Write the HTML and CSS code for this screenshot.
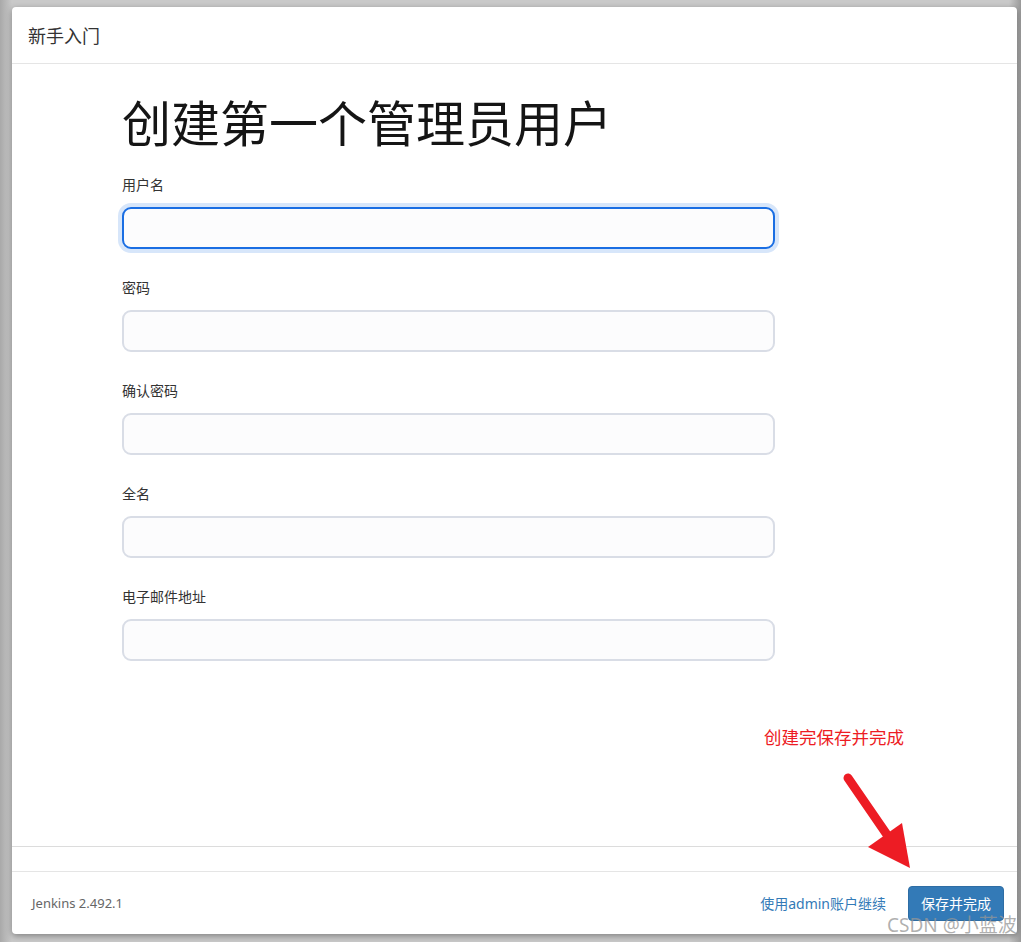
FILE: index.html
```html
<!DOCTYPE html>
<html lang="zh-CN">
<head>
    <meta charset="UTF-8">
    <meta name="viewport" content="width=device-width, initial-scale=1.0">
    <title>新手入门</title>
    <link rel="stylesheet" href="styles.css">
</head>
<body>
    <div class="dialog">
        <div class="dialog-header">新手入门</div>

        <div class="dialog-body">
            <h1>创建第一个管理员用户</h1>

            <div class="field">
                <label for="username">用户名</label>
                <input type="text" id="username" class="focused">
            </div>
            <div class="field">
                <label for="password1">密码</label>
                <input type="password" id="password1">
            </div>
            <div class="field">
                <label for="password2">确认密码</label>
                <input type="password" id="password2">
            </div>
            <div class="field">
                <label for="fullname">全名</label>
                <input type="text" id="fullname">
            </div>
            <div class="field">
                <label for="email">电子邮件地址</label>
                <input type="text" id="email">
            </div>
        </div>

        <div class="dialog-gap"></div>

        <div class="dialog-footer">
            <span class="version">Jenkins 2.492.1</span>
            <div class="actions">
                <a href="#" class="skip-link">使用admin账户继续</a>
                <button class="btn-primary">保存并完成</button>
            </div>
        </div>
    </div>

    <!-- 截图上的标注 -->
    <div class="note">创建完保存并完成</div>
    <svg class="note-arrow" width="90" height="110" viewBox="0 0 90 110">
        <line x1="8" y1="8" x2="52" y2="72" stroke="#ed1c24" stroke-width="9" stroke-linecap="round"/>
        <polygon points="28,77 62,53 70,98" fill="#ed1c24"/>
    </svg>
    <div class="watermark">CSDN @小蓝波</div>
</body>
</html>
```

FILE: styles.css
```css
/* 基础 */
body {
    margin: 0;
    height: 942px;
    overflow: hidden;
    position: relative;
    font-family: "Liberation Sans", "Noto Sans CJK SC", sans-serif;
    background: linear-gradient(to right, #a9a9a9 0, #c9c9c9 12px, #c9c9c9 1009px, #9a9a9a 1021px);
    color: #333;
}

.dialog {
    margin: 7px 4px 0 12px;
    height: 927px;
    background-color: #ffffff;
    border-radius: 4px;
    box-shadow: 0 2px 6px rgba(0, 0, 0, 0.35);
    display: flex;
    flex-direction: column;
    overflow: hidden;
}

.dialog-header {
    height: 56px;
    flex-shrink: 0;
    display: flex;
    align-items: center;
    padding-left: 16px;
    font-size: 18px;
    color: #333;
    border-bottom: 1px solid #e5e5e5;
}

.dialog-body {
    flex: 1;
    padding-left: 110px;
    border-bottom: 1px solid #dcdcdc;
}

h1 {
    margin: 32px 0 22px;
    font-size: 49px;
    font-weight: 400;
    line-height: 58px;
    color: #151515;
}

.field {
    margin-bottom: 30px;
}

.field label {
    display: block;
    font-size: 14px;
    line-height: 18px;
    color: #333;
    margin-bottom: 13px;
}

.field input {
    display: block;
    box-sizing: border-box;
    width: 653px;
    height: 42px;
    background-color: #fcfcfd;
    border: 2px solid #d9dde6;
    border-radius: 9px;
    outline: none;
    padding: 0 10px;
}

.field input.focused {
    border-color: #1a6ee3;
    box-shadow: 0 0 0 4px #d7e6fa;
}

.dialog-gap {
    height: 24px;
    flex-shrink: 0;
    border-bottom: 1px solid #e5e5e5;
}

.dialog-footer {
    height: 62px;
    flex-shrink: 0;
    display: flex;
    align-items: center;
    justify-content: space-between;
    padding: 0 13px 0 20px;
    font-family: "Noto Sans", "Noto Sans CJK SC", sans-serif;
}

.version {
    font-size: 13px;
    color: #666;
}

.actions {
    display: flex;
    align-items: center;
    gap: 22px;
}

.skip-link {
    font-size: 14px;
    color: #337ab7;
    text-decoration: none;
}

.btn-primary {
    height: 35px;
    padding: 0 12px;
    font-family: inherit;
    font-size: 14px;
    color: #ffffff;
    background-color: #337ab7;
    border: 1px solid #2e6da4;
    border-radius: 4px;
}

/* 标注 */
.note {
    position: absolute;
    left: 764px;
    top: 726px;
    font-size: 17.5px;
    line-height: 24px;
    color: #ed1c24;
}

.note-arrow {
    position: absolute;
    left: 840px;
    top: 770px;
}

.watermark {
    position: absolute;
    left: 887px;
    top: 912px;
    font-family: "Noto Sans", "Noto Sans CJK SC", sans-serif;
    font-size: 19px;
    line-height: 26px;
    color: rgba(150, 150, 150, 0.75);
}
```
